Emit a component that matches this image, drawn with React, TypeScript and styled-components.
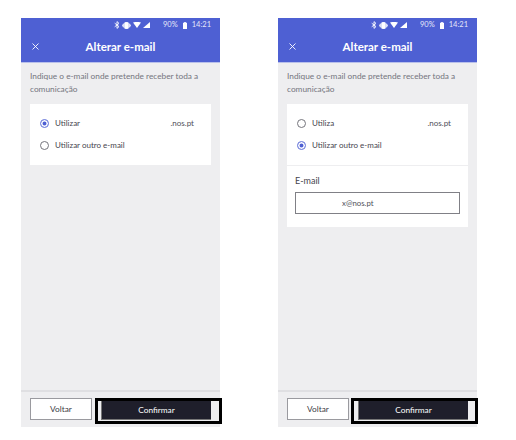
import React from "react";
import styled, { createGlobalStyle } from "styled-components";

const Global = createGlobalStyle`
  html, body { margin: 0; padding: 0; background: #fff; }
  body { font-family: "Lato", "Liberation Sans", sans-serif; }
`;

const Page = styled.div`
  display: flex;
  gap: 58px;
  padding: 18px 0 0 21px;
  width: 516px;
  height: 440px;
  box-sizing: border-box;
`;

const Phone = styled.div`
  width: 199px;
  height: 409px;
  display: flex;
  flex-direction: column;
  background: #eeeef0;
`;

const Header = styled.div`
  height: 45px;
  flex: none;
  box-sizing: border-box;
  display: flex;
  flex-direction: column;
  background: #4e60d3;
  border-bottom: 1px solid #b9c0ea;
  color: #fff;
`;

const StatusBar = styled.div`
  height: 12px;
  padding: 1px 9px 0 93px;
  display: flex;
  align-items: center;
  justify-content: space-between;
  font-size: 7.5px;
  color: #e4e7f8;
  line-height: 12px;
`;

const StatusIcons = styled.div`
  display: flex;
  align-items: center;
  gap: 2px;
  margin-right: 11px;
`;

const StatusRight = styled.div`
  display: flex;
  align-items: center;
  gap: 5px;
`;

const TitleRow = styled.div`
  position: relative;
  flex: 1;
  display: flex;
  align-items: center;
  justify-content: center;
  padding-bottom: 1px;
  font-size: 11.5px;
  font-weight: 700;
`;

const Close = styled.svg`
  position: absolute;
  left: 11px;
  top: 12px;
`;

const Body = styled.div`
  flex: 1;
  padding: 7px 9px 0;
  display: flex;
  flex-direction: column;
`;

const Intro = styled.p`
  margin: 0 0 9px;
  font-size: 8.3px;
  line-height: 12.5px;
  color: #75757e;
`;

const Card = styled.div`
  background: #fff;
`;

const Options = styled.div`
  height: 61px;
  padding: 12px 10px 0;
  box-sizing: border-box;
  display: flex;
  flex-direction: column;
  gap: 8px;
`;

const Option = styled.div`
  height: 14px;
  display: flex;
  align-items: center;
  font-size: 8px;
  color: #45454e;
`;

const Radio = styled.span<{ $on?: boolean }>`
  width: 9px;
  height: 9px;
  flex: none;
  margin-right: 6px;
  border-radius: 50%;
  box-sizing: border-box;
  background: ${(p) => (p.$on ? "#4e60d3" : "#fff")};
  border: ${(p) => (p.$on ? "1px solid #7f8ce0" : "1px solid #75757c")};
  box-shadow: ${(p) => (p.$on ? "inset 0 0 0 1.5px #fff" : "none")};
`;

const Domain = styled.span`
  margin-left: auto;
  padding-right: 7px;
  color: #50505a;
`;

const EmailBlock = styled.div`
  height: 62px;
  padding: 9px 8px 0;
  box-sizing: border-box;
  border-top: 1px solid #eeeef0;
`;

const EmailLabel = styled.div`
  font-size: 9px;
  line-height: 12px;
  color: #45454e;
  margin-bottom: 5px;
`;

const EmailField = styled.div`
  height: 22px;
  box-sizing: border-box;
  border: 1px solid #808086;
  display: flex;
  align-items: center;
  padding-left: 46px;
  font-size: 7.8px;
  color: #50505a;
`;

const Footer = styled.div`
  height: 37px;
  flex: none;
  border-top: 2px solid #dfdfe2;
  display: flex;
  align-items: flex-start;
  padding: 6px 0 0 9px;
  box-sizing: border-box;
`;

const BackButton = styled.div`
  width: 62px;
  height: 22px;
  flex: none;
  box-sizing: border-box;
  border: 1px solid #9a9a9f;
  background: #fff;
  display: flex;
  align-items: center;
  justify-content: center;
  font-size: 8.3px;
  color: #3c3c44;
`;

const ConfirmFrame = styled.div<{ $shifted?: boolean }>`
  flex: none;
  margin-left: ${(p) => (p.$shifted ? 2 : 3)}px;
  width: 127px;
  height: 26px;
  box-sizing: border-box;
  border: 3px solid #000;
  background: #eeeef0;
  padding: 0 ${(p) => (p.$shifted ? "7px 0 4px" : "8px 0 3px")};
`;

const ConfirmButton = styled.div`
  height: 19px;
  background: #1f1f2b;
  border-bottom: 1px solid #777;
  border-left: 1px solid #777;
  box-sizing: border-box;
  display: flex;
  align-items: center;
  justify-content: center;
  font-size: 8.3px;
  color: #fff;
`;

const StatusGlyphs = () => (
  <StatusIcons>
    <svg width="6" height="8" viewBox="0 0 6 8" fill="none" stroke="#fff" strokeWidth="0.9">
      <path d="M0.7 2.2 5 5.6 3 7.4V0.6L5 2.4 0.7 5.8" />
    </svg>
    <svg width="9" height="7" viewBox="0 0 9 7" fill="none" stroke="#fff" strokeWidth="0.9">
      <rect x="2.7" y="0.5" width="3.6" height="6" rx="0.6" fill="#fff" />
      <path d="M1.4 1.6v3.8M7.6 1.6v3.8M0.3 2.6v1.8M8.7 2.6v1.8" />
    </svg>
    <svg width="8" height="6" viewBox="0 0 8 6" fill="#fff">
      <path d="M0 0.6C2.4-0.4 5.6-0.4 8 0.6L4 6Z" />
    </svg>
    <svg width="7" height="6" viewBox="0 0 7 6" fill="#fff">
      <path d="M7 0V6H0Z" />
    </svg>
  </StatusIcons>
);

const Battery = () => (
  <svg width="4" height="7" viewBox="0 0 4 7" fill="#fff">
    <path d="M1.2 0h1.6v0.7H4V7H0V0.7h1.2Z" />
  </svg>
);

const Screen = ({ other }: { other?: boolean }) => (
  <Phone>
    <Header>
      <StatusBar>
        <StatusGlyphs />
        <StatusRight>
          <span>90%</span>
          <Battery />
          <span>14:21</span>
        </StatusRight>
      </StatusBar>
      <TitleRow>
        <Close width="7" height="7" viewBox="0 0 7 7" stroke="#fff" strokeWidth="0.9" fill="none">
          <path d="M0.5 0.5 6.5 6.5M6.5 0.5 0.5 6.5" />
        </Close>
        Alterar e-mail
      </TitleRow>
    </Header>
    <Body>
      <Intro>
        Indique o e-mail onde pretende receber toda a comunicação
      </Intro>
      <Card>
        <Options>
          <Option>
            <Radio $on={!other} />
            {other ? "Utiliza" : "Utilizar"}
            <Domain>.nos.pt</Domain>
          </Option>
          <Option>
            <Radio $on={other} />
            Utilizar outro e-mail
          </Option>
        </Options>
        {other && (
          <EmailBlock>
            <EmailLabel>E-mail</EmailLabel>
            <EmailField>x@nos.pt</EmailField>
          </EmailBlock>
        )}
      </Card>
    </Body>
    <Footer>
      <BackButton>Voltar</BackButton>
      <ConfirmFrame $shifted={other}>
        <ConfirmButton>Confirmar</ConfirmButton>
      </ConfirmFrame>
    </Footer>
  </Phone>
);

export default function App() {
  return (
    <Page>
      <Global />
      <Screen />
      <Screen other />
    </Page>
  );
}
